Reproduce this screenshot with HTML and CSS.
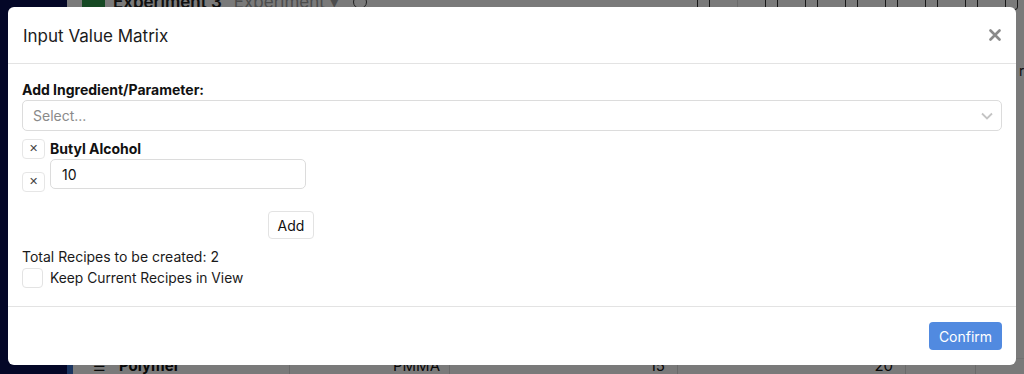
FILE: index.html
```html
<!DOCTYPE html>
<html>
<head>
<meta charset="utf-8">
<link rel="stylesheet" href="styles.css">
</head>
<body>
<div class="app">
  <aside class="sidebar"></aside>
  <div class="accent"></div>
  <main class="main">
    <div class="topbar">
      <span class="exp-icon"></span>
      <span class="exp-title">Experiment 3</span>
      <span class="exp-type">Experiment ▾</span>
      <span class="tb-cloud"></span>
      <span class="tb-icons">
        <span class="tb-i"></span><span class="tb-div"></span><span class="tb-i"></span><span class="tb-i"></span><span class="tb-i"></span><span class="tb-i"></span><span class="tb-i"></span><span class="tb-i"></span><span class="tb-i"></span>
      </span>
    </div>
    <div class="side-text">ri</div>
    <div class="table-row">
      <span class="cell c-handle">☰</span>
      <span class="cell c-name">Polymer</span>
      <span class="cell c-val">PMMA</span>
      <span class="cell c-num">15</span>
      <span class="cell c-num2">20</span>
      <span class="cell c-end"></span>
    </div>
  </main>
</div>

<div class="backdrop">
  <div class="modal">
    <div class="modal-header">
      <h2 class="modal-title">Input Value Matrix</h2>
      <button class="close-btn" aria-label="Close">
        <svg width="12" height="12" viewBox="0 0 12 12"><path d="M1.5 1.5 L10.5 10.5 M10.5 1.5 L1.5 10.5" stroke="#8a8a8a" stroke-width="2.6" stroke-linecap="round"/></svg>
      </button>
    </div>
    <div class="modal-body">
      <label class="field-label">Add Ingredient/Parameter:</label>
      <div class="select">
        <span class="placeholder">Select...</span>
        <svg class="chev" width="12" height="8" viewBox="0 0 12 8"><path d="M1 1.5 L6 6.5 L11 1.5" fill="none" stroke="#c4c4c4" stroke-width="1.8"/></svg>
      </div>
      <div class="ingredient">
        <button class="x-btn">✕</button>
        <span class="ing-name">Butyl Alcohol</span>
        <button class="x-btn x-low">✕</button>
        <input class="value-input" type="text" value="10">
      </div>
      <button class="add-btn">Add</button>
      <div class="total">Total Recipes to be created: 2</div>
      <label class="keep">
        <span class="checkbox"></span>
        <span>Keep Current Recipes in View</span>
      </label>
    </div>
    <div class="modal-footer">
      <button class="confirm-btn">Confirm</button>
    </div>
  </div>
</div>
</body>
</html>
```

FILE: styles.css
```css
* { box-sizing: border-box; }
html, body { margin: 0; padding: 0; }
body {
  width: 1024px;
  height: 374px;
  overflow: hidden;
  font-family: Inter, "Noto Sans", Arial, sans-serif;
  color: #111;
  position: relative;
}

/* background app */
.app {
  display: flex;
  height: 374px;
  background: #ffffff;
}
.sidebar {
  width: 67px;
  background: #0a1052;
  flex-shrink: 0;
}
.accent {
  width: 6px;
  background: #ffffff;
  flex-shrink: 0;
  box-shadow: inset 0 -14px 0 #3a6fc8;
}
.main {
  flex: 1;
  display: flex;
  flex-direction: column;
  position: relative;
}
.topbar {
  height: 30px;
  margin-top: -13px;
  display: flex;
  align-items: center;
  padding-left: 9px;
  gap: 8px;
  font-size: 17px;
}
.exp-icon {
  width: 23px;
  height: 22px;
  border-radius: 3px;
  background: #2f9a4c;
}
.exp-title { font-weight: 600; color: #222; }
.exp-type { color: #a0a0a0; margin-left: 4px; }
.tb-cloud {
  width: 14px;
  height: 14px;
  border: 1.5px solid #444;
  border-radius: 50%;
  margin-left: 6px;
}
.tb-icons {
  margin-left: auto;
  display: flex;
  align-items: center;
  gap: 27px;
  padding-right: 6px;
}
.tb-i {
  width: 13px;
  height: 16px;
  border: 1.5px solid #333;
  border-radius: 3px;
}
.tb-div { width: 1px; height: 24px; background: #ddd; }
.side-text {
  position: absolute;
  right: -4px;
  top: 62px;
  font-size: 14px;
  color: #222;
}
.table-row {
  margin-top: auto;
  height: 16px;
  display: flex;
  align-items: flex-start;
  font-size: 15px;
  line-height: 22px;
  color: #111;
  border-top: 1px solid #eee;
}
.cell { height: 22px; margin-top: -4px; }
.c-handle { width: 46px; padding-left: 20px; font-size: 14px; }
.c-name { width: 171px; font-weight: 700; border-right: 1px solid #ddd; }
.c-val { width: 160px; text-align: right; padding-right: 9px; border-right: 1px solid #ddd; }
.c-num { width: 228px; text-align: right; padding-right: 12px; border-right: 1px solid #ddd; }
.c-num2 { width: 228px; text-align: right; padding-right: 12px; border-right: 1px solid #ddd; }
.c-end { width: 70px; border-right: 1px solid #ddd; }

/* modal */
.backdrop {
  position: absolute;
  inset: 0;
  background: rgba(0, 0, 0, 0.52);
}
.modal {
  position: absolute;
  left: 8px;
  top: 7px;
  width: 1008px;
  background: #fff;
  border-radius: 6px;
  display: flex;
  flex-direction: column;
}
.modal-header {
  height: 57px;
  display: flex;
  align-items: center;
  justify-content: space-between;
  padding: 0 15px 0 15px;
  border-bottom: 1px solid #e3e3e3;
}
.modal-title {
  margin: 0;
  font-size: 17px;
  font-weight: 400;
  color: #1b1b1b;
  padding-top: 1px;
}
.close-btn {
  border: 0;
  background: none;
  padding: 0;
  width: 12px;
  height: 12px;
  display: flex;
  cursor: pointer;
}
.modal-body {
  padding: 16px 14px 15px 14px;
  display: flex;
  flex-direction: column;
  align-items: flex-start;
  height: 242px;
}
.field-label {
  font-size: 14px;
  font-weight: 700;
  line-height: 20px;
  color: #111;
}
.select {
  width: 980px;
  height: 31px;
  border: 1px solid #dcdcdc;
  border-radius: 5px;
  display: flex;
  align-items: center;
  justify-content: space-between;
  padding: 0 8px 0 10px;
}
.placeholder { font-size: 14px; color: #8a8a8a; }
.chev { margin-top: 1px; }
.ingredient {
  margin-top: 8px;
  display: grid;
  grid-template-columns: 23px 256px;
  column-gap: 5px;
  align-items: start;
}
.x-btn {
  width: 23px;
  height: 20px;
  padding: 0;
  border: 1px solid #e6e6e6;
  border-radius: 4px;
  background: #fff;
  font-size: 11px;
  color: #444;
  font-family: "DejaVu Sans", sans-serif;
  line-height: 18px;
}
.x-low { margin-top: 13px; }
.ing-name {
  font-size: 14px;
  font-weight: 700;
  line-height: 20px;
}
.value-input {
  width: 256px;
  height: 30px;
  border: 1px solid #dcdcdc;
  border-radius: 5px;
  padding: 0 11px;
  font-size: 14px;
  font-family: Inter, "Noto Sans", Arial, sans-serif;
  color: #111;
}
.add-btn {
  margin-top: 19px;
  margin-left: 246px;
  width: 46px;
  height: 28px;
  border: 1px solid #e3e3e3;
  border-radius: 4px;
  background: #fff;
  font-size: 14px;
  font-family: Inter, "Noto Sans", Arial, sans-serif;
  color: #111;
  padding: 0;
}
.total {
  margin-top: 8px;
  font-size: 14px;
  line-height: 20px;
  color: #1a1a1a;
}
.keep {
  display: flex;
  align-items: center;
  gap: 7px;
  font-size: 13.8px;
  color: #1a1a1a;
  margin-top: 1px;
}
.checkbox {
  width: 21px;
  height: 20px;
  border: 1px solid #e3e3e3;
  border-radius: 4px;
  background: #fff;
}
.modal-footer {
  height: 59px;
  border-top: 1px solid #e3e3e3;
  display: flex;
  justify-content: flex-end;
  align-items: flex-start;
  padding: 15px 14px 0 0;
}
.confirm-btn {
  width: 73px;
  height: 28px;
  border: 0;
  border-radius: 4px;
  background: #518ae0;
  color: #fff;
  font-size: 14px;
  font-family: Inter, "Noto Sans", Arial, sans-serif;
  padding: 0;
}
```
